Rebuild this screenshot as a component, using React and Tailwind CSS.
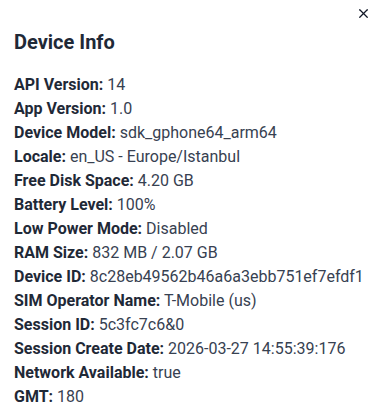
import { X } from 'lucide-react';

const rows = [
  ['API Version', '14'],
  ['App Version', '1.0'],
  ['Device Model', 'sdk_gphone64_arm64'],
  ['Locale', 'en_US - Europe/Istanbul'],
  ['Free Disk Space', '4.20 GB'],
  ['Battery Level', '100%'],
  ['Low Power Mode', 'Disabled'],
  ['RAM Size', '832 MB / 2.07 GB'],
  ['Device ID', '8c28eb49562b46a6a3ebb751ef7efdf1'],
  ['SIM Operator Name', 'T-Mobile (us)'],
  ['Session ID', '5c3fc7c6&0'],
  ['Session Create Date', '2026-03-27 14:55:39:176'],
  ['Network Available', 'true'],
  ['GMT', '180'],
];

export default function App() {
  return (
    <div className="relative w-[376px] h-[416px] bg-white font-['Roboto',sans-serif] text-[#1f2937] overflow-hidden">
      {/* Close button */}
      <button className="absolute top-[1px] right-[1px] w-6 h-6 flex items-center justify-center text-[#111827]">
        <X size={15} strokeWidth={2} />
      </button>

      <div className="px-[14px] pt-[28px]">
        <h2 className="text-[20px] leading-[28px] font-bold">Device Info</h2>

        <div className="mt-[17px] flex flex-col">
          {rows.map(([label, value]) => (
            <div key={label} className="text-[16px] leading-[24px] whitespace-nowrap">
              <span className="font-bold">{label}:</span>{' '}
              <span className="text-[#374151]">{value}</span>
            </div>
          ))}
        </div>
      </div>
    </div>
  );
}
